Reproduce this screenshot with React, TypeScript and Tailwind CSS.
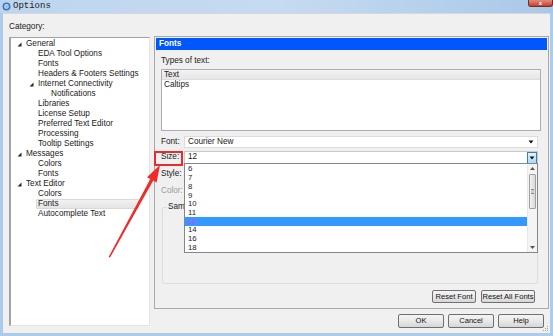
import React from 'react';

type Node = { label: string; level: 0 | 1 | 2; open?: boolean; selected?: boolean };

const tree: Node[] = [
  { label: 'General', level: 0, open: true },
  { label: 'EDA Tool Options', level: 1 },
  { label: 'Fonts', level: 1 },
  { label: 'Headers & Footers Settings', level: 1 },
  { label: 'Internet Connectivity', level: 1, open: true },
  { label: 'Notifications', level: 2 },
  { label: 'Libraries', level: 1 },
  { label: 'License Setup', level: 1 },
  { label: 'Preferred Text Editor', level: 1 },
  { label: 'Processing', level: 1 },
  { label: 'Tooltip Settings', level: 1 },
  { label: 'Messages', level: 0, open: true },
  { label: 'Colors', level: 1 },
  { label: 'Fonts', level: 1 },
  { label: 'Text Editor', level: 0, open: true },
  { label: 'Colors', level: 1 },
  { label: 'Fonts', level: 1, selected: true },
  { label: 'Autocomplete Text', level: 1 },
];

const indent = { 0: 'pl-[6px]', 1: 'pl-[18px]', 2: 'pl-[31px]' };

const sizes = ['6', '7', '8', '9', '10', '11', '12', '14', '16', '18'];

function Expander() {
  return (
    <svg width="5" height="5" viewBox="0 0 5 5" className="block">
      <polygon points="4.5,0.5 4.5,4.5 0.5,4.5" fill="#262626" />
    </svg>
  );
}

function DownArrow() {
  return (
    <svg width="6" height="4" viewBox="0 0 6 4" className="block">
      <polygon points="0.5,0.5 5.5,0.5 3,3.5" fill="#111" />
    </svg>
  );
}

function Button({ children, className }: { children: React.ReactNode; className: string }) {
  return (
    <div
      className={`flex items-center justify-center rounded-[2px] border border-[#707070] bg-gradient-to-b from-[#f4f4f4] via-[#e9e9e9] to-[#d6d6d6] text-[7.6px] text-[#111] ${className}`}
    >
      {children}
    </div>
  );
}

export default function App() {
  return (
    <div className="relative h-[336px] w-[553px] overflow-hidden bg-[#aecbea] font-['Liberation_Sans',Arial,sans-serif] text-[8.2px] text-[#1a1a1a]">
      {/* title bar */}
      <div className="flex h-[13px] items-center bg-gradient-to-r from-[#bcd5ee] via-[#c6dbf1] to-[#a9c8e8]">
        <svg width="9" height="9" viewBox="0 0 9 9" className="ml-[2px] block">
          <circle cx="4.5" cy="4.5" r="3.2" fill="none" stroke="#3c78c0" strokeWidth="1.6" />
          <circle cx="4.5" cy="4.5" r="1.2" fill="#9ab7d6" />
        </svg>
        <span className="ml-[2px] font-['Liberation_Mono',monospace] text-[9px] leading-none text-[#222]">Options</span>
        <div className="ml-auto flex h-[7px] w-[25px] items-start justify-center self-start rounded-b-[3px] border border-t-0 border-[#7a2a22] bg-gradient-to-b from-[#e08a7a] to-[#c4402c]">
          <span className="text-[6px] font-bold leading-[6px] text-white">x</span>
        </div>
      </div>

      {/* window body */}
      <div className="mx-[3px] flex h-[320px] border-t border-[#d8d8d8] bg-[#f0f0f0]">
        {/* left column */}
        <div className="ml-[6px] flex w-[141px] flex-col">
          <div className="mt-[8px] h-[10px] leading-[10px]">Category:</div>
          <div className="mt-[5px] h-[289px] border border-l-2 border-[#a3a3a3] border-b-[#e4e4e4] border-r-[#e4e4e4] bg-white pt-[1px]">
            {tree.map((n, i) => (
              <div key={i} className={`flex h-[10px] items-center leading-[10px] ${indent[n.level]}`}>
                <span className="flex w-[9px] items-center">{n.open ? <Expander /> : null}</span>
                {n.selected ? (
                  <span className="-ml-[2px] h-[10px] w-[103px] rounded-[1px] border border-[#d9d9d9] bg-gradient-to-b from-[#f2f2f2] to-[#e4e4e4] pl-[1px] leading-[8px]">
                    {n.label}
                  </span>
                ) : (
                  <span className="whitespace-nowrap">{n.label}</span>
                )}
              </div>
            ))}
          </div>
        </div>

        {/* right column */}
        <div className="ml-[4px] flex w-[395px] flex-col">
          <div className="mt-[22px] flex h-[273px] flex-col border border-[#a9a9a9] p-px">
            <div className="h-[12px] bg-[#0057ff] pl-[3px] text-[8.2px] font-bold leading-[12px] text-white">Fonts</div>
            <div className="flex flex-1 flex-col pl-[5px] pr-[9px]">
              <div className="mt-[6px] h-[10px] leading-[10px]">Types of text:</div>
              <div className="mt-[3px] h-[62px] w-[380px] border border-[#abadb3] bg-white">
                <div className="h-[10px] border-b border-[#dedede] bg-gradient-to-b from-[#f3f3f3] to-[#e6e6e6] pl-[2px] leading-[10px]">Text</div>
                <div className="h-[10px] pl-[2px] leading-[10px]">Caltips</div>
              </div>

              {/* Font row */}
              <div className="mt-[5px] flex h-[12px] items-center">
                <span className="w-[23px]">Font:</span>
                <div className="flex h-[12px] w-[354px] items-center border border-[#dcdcdc] bg-white pl-[3px] pr-[3px]">
                  <span>Courier New</span>
                  <span className="ml-auto"><DownArrow /></span>
                </div>
              </div>

              {/* Size row */}
              <div className="relative z-10 mt-[3px] flex h-[13px] items-center">
                <span className="w-[23px]">Size:</span>
                <div className="pointer-events-none absolute -left-[7px] -top-[0.5px] h-[15px] w-[29px] border-2 border-[#ea2b2b]" />
                <div className="relative flex h-[13px] w-[354px] items-center border border-[#c9c9c9] bg-white pl-[3px]">
                  <span>12</span>
                  <div className="ml-auto flex h-[12px] w-[10px] items-center justify-center border border-[#3c7fb1] bg-gradient-to-b from-[#e5f4fc] to-[#a7d9f5]">
                    <DownArrow />
                  </div>
                  {/* open dropdown */}
                  <div className="absolute -left-px top-full z-20 flex h-[90px] w-[354px] border border-[#828790] bg-white">
                    <div className="flex-1 pt-px">
                      {sizes.map((s) => (
                        <div
                          key={s}
                          className={`flex h-[8.7px] items-center pl-[3px] text-[7.8px] leading-none ${s === '12' ? 'bg-[#3399ff] text-[#d93cff]' : 'text-[#222238]'}`}
                        >
                          {s}
                        </div>
                      ))}
                    </div>
                    <div className="flex w-[10px] flex-col border-l border-[#e8e8e8] bg-[#f4f4f4]">
                      <div className="flex h-[9px] items-center justify-center">
                        <svg width="5" height="3" viewBox="0 0 5 3"><polygon points="0,3 5,3 2.5,0" fill="#555" /></svg>
                      </div>
                      <div className="flex-1">
                        <div className="mx-[1px] mt-[1px] flex h-[35px] items-center justify-center rounded-[1px] border border-[#a0a0a0] bg-gradient-to-r from-[#f2f2f2] to-[#d8d8d8]">
                          <div className="h-[5px] w-[3px] border-y border-[#8a8a8a] bg-[#cfcfcf]" />
                        </div>
                      </div>
                      <div className="flex h-[9px] items-center justify-center">
                        <svg width="5" height="3" viewBox="0 0 5 3"><polygon points="0,0 5,0 2.5,3" fill="#555" /></svg>
                      </div>
                    </div>
                  </div>
                </div>
              </div>

              <div className="mt-[5px] h-[10px] leading-[10px]">Style:</div>
              <div className="mt-[7px] h-[10px] leading-[10px] text-[#9a9a9a]">Color:</div>

              <div className="relative mt-[11px] ml-px h-[77px] w-[376px] rounded-[2px] border border-[#d5dfe5]">
                {/* label sits under the open dropdown, as in the dialog */}
                <span className="absolute -top-[6px] left-[4px] bg-[#f0f0f0] px-[1px] leading-[10px]">Sample</span>
              </div>

              <div className="mt-[6px] flex justify-end gap-[5px] pr-[3px]">
                <Button className="h-[13px] w-[44px]">Reset Font</Button>
                <Button className="h-[13px] w-[54px]">Reset All Fonts</Button>
              </div>
            </div>
          </div>

          <div className="mt-[5px] flex justify-end gap-[4px] pr-[5px]">
            <Button className="h-[14px] w-[46px]">OK</Button>
            <Button className="h-[14px] w-[46px]">Cancel</Button>
            <Button className="h-[14px] w-[46px]">Help</Button>
          </div>
        </div>
      </div>

      {/* resize grip */}
      <svg width="6" height="6" viewBox="0 0 6 6" className="absolute bottom-[4px] right-[4px]">
        <rect x="4" y="0" width="1" height="1" fill="#a0a0a0" />
        <rect x="2" y="2" width="1" height="1" fill="#a0a0a0" />
        <rect x="4" y="2" width="1" height="1" fill="#a0a0a0" />
        <rect x="0" y="4" width="1" height="1" fill="#a0a0a0" />
        <rect x="2" y="4" width="1" height="1" fill="#a0a0a0" />
        <rect x="4" y="4" width="1" height="1" fill="#a0a0a0" />
      </svg>

      {/* annotation arrow */}
      <svg width="553" height="336" viewBox="0 0 553 336" className="pointer-events-none absolute left-0 top-0">
        <polygon points="108.6,257 110,257.6 153.3,180.6 156.6,182.6 160,165 147,177.2 150.3,179" fill="#f22a2a" />
      </svg>
    </div>
  );
}
